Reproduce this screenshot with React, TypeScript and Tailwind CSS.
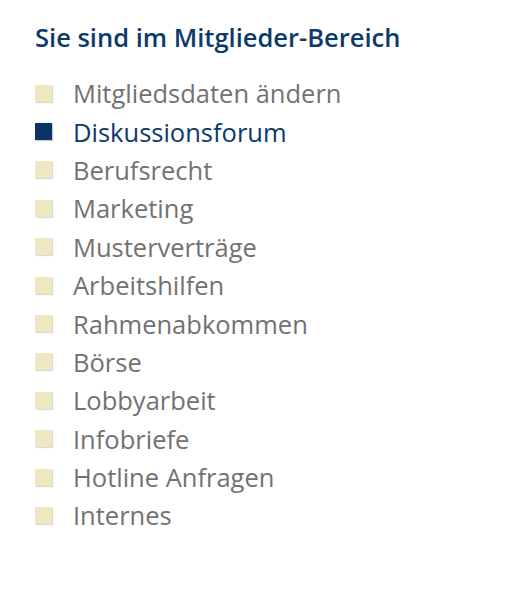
import React from 'react';

const items = [
    'Mitgliedsdaten ändern',
    'Diskussionsforum',
    'Berufsrecht',
    'Marketing',
    'Musterverträge',
    'Arbeitshilfen',
    'Rahmenabkommen',
    'Börse',
    'Lobbyarbeit',
    'Infobriefe',
    'Hotline Anfragen',
    'Internes',
];

const active = 'Diskussionsforum';

export default function App() {
    return (
        <div className="w-[505px] h-[595px] bg-white pl-[35px] pt-[20px]" style={{ fontFamily: '"Open Sans", sans-serif' }}>
            <h2 className="text-[25.5px] leading-[34px] font-semibold text-[#0d3a6a]">Sie sind im Mitglieder-Bereich</h2>
            <ul className="mt-[20px] flex flex-col">
                {items.map((item) => {
                    const isActive = item === active;
                    return (
                        <li key={item} className="flex items-center h-[38.4px]">
                            <span
                                className={
                                    isActive
                                        ? 'w-[17px] h-[17px] bg-[#0b3566] shadow-[1px_1px_1px_rgba(0,0,0,0.2)]'
                                        : 'w-[17px] h-[17px] bg-[#efe7bf] shadow-[1px_1px_1px_rgba(0,0,0,0.15)]'
                                }
                            />
                            <a
                                href="#"
                                className={
                                    isActive
                                        ? 'ml-[21px] text-[25.5px] leading-[34px] text-[#0d3a6a]'
                                        : 'ml-[21px] text-[25.5px] leading-[34px] text-[#727272]'
                                }
                            >
                                {item}
                            </a>
                        </li>
                    );
                })}
            </ul>
        </div>
    );
}
